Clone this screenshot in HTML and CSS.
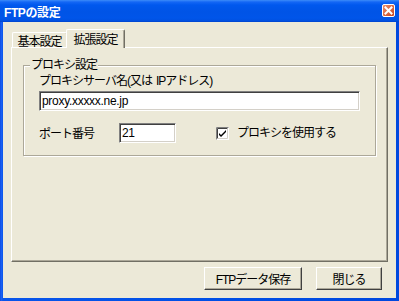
FILE: index.html
```html
<!DOCTYPE html>
<html lang="ja">
<head>
<meta charset="utf-8">
<title>FTPの設定</title>
<link rel="stylesheet" href="styles.css">
</head>
<body>
<div class="window">
  <div class="titlebar">
    <span class="title">FTPの設定</span>
    <span class="close">
      <svg width="13" height="13" viewBox="0 0 13 13">
        <defs>
          <linearGradient id="cg" x1="0" y1="0" x2="1" y2="1">
            <stop offset="0" stop-color="#F0926E"/>
            <stop offset="1" stop-color="#C5411B"/>
          </linearGradient>
        </defs>
        <rect x="0.5" y="0.5" width="12" height="12" rx="1.5" fill="url(#cg)" stroke="#FFFFFF"/>
        <path d="M3.5 3.5 L9.5 9.5 M9.5 3.5 L3.5 9.5" stroke="#FFFFFF" stroke-width="2" stroke-linecap="square"/>
      </svg>
    </span>
  </div>
  <div class="client">
    <div class="tabs">
      <div class="tab">基本設定</div>
      <div class="tab active">拡張設定</div>
    </div>
    <div class="panel">
      <div class="group">
        <span class="legend">プロキシ設定</span>
        <div class="label">プロキシサーバ名(又は<span class="sp"> </span>IPアドレス)</div>
        <div class="input wide">proxy.xxxxx.ne.jp</div>
        <div class="row">
          <span class="label port">ポート番号</span>
          <div class="input small">21</div>
          <span class="check">
            <svg width="13" height="13" viewBox="0 0 13 13">
              <rect x="0" y="0" width="13" height="13" fill="#FFFFFF"/>
              <path d="M0.5 12.5 V0.5 H12.5" fill="none" stroke="#808080"/>
              <path d="M1.5 11.5 V1.5 H11.5" fill="none" stroke="#404040"/>
              <path d="M1.5 11.5 H11.5 V1.5" fill="none" stroke="#D4D0C8"/>
              <path d="M3 6 L5 8 L10 3 V5 L5 10 L3 8 Z" fill="#000000"/>
            </svg>
          </span>
          <span class="check-label">プロキシを使用する</span>
        </div>
      </div>
    </div>
    <div class="buttons">
      <div class="btn save">FTPデータ保存</div>
      <div class="btn closebtn">閉じる</div>
    </div>
  </div>
</div>
</body>
</html>
```

FILE: styles.css
```css
* { box-sizing: border-box; }
html, body { margin: 0; padding: 0; }
body {
  width: 399px;
  height: 301px;
  overflow: hidden;
  font-family: "Liberation Sans", "Noto Sans CJK JP", sans-serif;
  font-size: 12px;
  color: #000;
}
.window {
  width: 399px;
  height: 301px;
  display: flex;
  flex-direction: column;
  background: linear-gradient(90deg, #0842D8 0px, #1C62F5 1px, #0955EA 3px, #0050E6 50%, #0048DE 100%);
  padding: 0 3px 3px 3px;
}
.titlebar {
  height: 22px;
  margin: 0 -3px;
  display: flex;
  align-items: center;
  justify-content: space-between;
  padding: 1px 4px 0 4px;
  background: linear-gradient(180deg, #3C8CF8 0px, #1467F5 2px, #0058EE 5px, #0054E6 12px, #0055E9 18px, #0050E0 21px, #0040C8 22px);
}
.title {
  color: #fff;
  font-weight: bold;
  font-size: 12px;
  letter-spacing: -0.4px;
}
.close {
  display: flex;
  width: 13px;
  height: 13px;
  margin-top: -2px;
}
.client {
  flex: 1;
  background: #ECE9D8;
  display: flex;
  flex-direction: column;
  padding: 7px 8px 0 8px;
}
.tabs {
  display: flex;
  align-items: flex-end;
  height: 19px;
  padding-left: 1px;
  position: relative;
  z-index: 1;
  margin-bottom: -1px;
}
.tab {
  height: 15px;
  width: 55px;
  border-left: 1px solid #fff;
  border-top: 1px solid #fff;
  border-right: 1px solid #716F64;
  border-top-left-radius: 2px;
  border-top-right-radius: 2px;
  background: #ECE9D8;
  display: flex;
  align-items: center;
  justify-content: center;
  letter-spacing: -1px;
  padding-top: 1px;
  margin-bottom: 1px;
}
.tab.active {
  height: 19px;
  width: 59px;
  margin-left: -1px;
  margin-bottom: 0;
  padding-bottom: 2px;
  box-shadow: inset -1px 0 #ACA899;
}
.panel {
  width: 377px;
  height: 215px;
  border-left: 1px solid #fff;
  border-top: 1px solid #fff;
  border-right: 1px solid #716F64;
  border-bottom: 1px solid #716F64;
  box-shadow: inset -1px -1px #ACA899;
  padding-top: 17px;
}
.group {
  position: relative;
  margin: 0 11px;
  border: 1px solid #ACA899;
  box-shadow: inset 1px 1px #fff, 1px 1px #fff;
  padding: 8px 15px 12px 15px;
}
.legend {
  position: absolute;
  left: 6px;
  top: -8px;
  background: #ECE9D8;
  padding: 0 1px 0 1px;
  line-height: 14px;
  letter-spacing: -1px;
}
.label {
  line-height: 14px;
  letter-spacing: -1px;
  white-space: nowrap;
}
.sp { display: inline-block; width: 4px; }
.input {
  background: #fff;
  height: 20px;
  border-top: 1px solid #808080;
  border-left: 1px solid #808080;
  border-right: 1px solid #fff;
  border-bottom: 1px solid #fff;
  box-shadow: inset 1px 1px #404040, inset -1px -1px #D4D0C8;
  padding-left: 2px;
  line-height: 18px;
  margin-top: 3px;
  white-space: nowrap;
  font-family: "Liberation Sans", sans-serif;
  font-size: 12px;
  letter-spacing: -0.3px;
}
.input.wide { width: 321px; }
.row {
  display: flex;
  align-items: center;
  height: 20px;
  margin-top: 12px;
}
.label.port { width: 80px; margin-top: 1px; }
.input.small { width: 57px; margin-top: 0; }
.check {
  display: flex;
  width: 13px;
  height: 13px;
  margin-left: 40px;
  margin-right: 8px;
}
.check-label {
  letter-spacing: -1px;
  line-height: 14px;
  white-space: nowrap;
}
.buttons {
  display: flex;
  justify-content: flex-end;
  gap: 14px;
  margin-top: 5px;
  padding-right: 6px;
}
.btn {
  height: 23px;
  display: flex;
  align-items: center;
  justify-content: center;
  border-left: 1px solid #fff;
  border-top: 1px solid #fff;
  border-right: 1px solid #404040;
  border-bottom: 1px solid #404040;
  box-shadow: inset -1px -1px #ACA899;
  letter-spacing: -1px;
  background: #ECE9D8;
}
.btn.save { width: 98px; }
.btn.closebtn { width: 66px; }
```
